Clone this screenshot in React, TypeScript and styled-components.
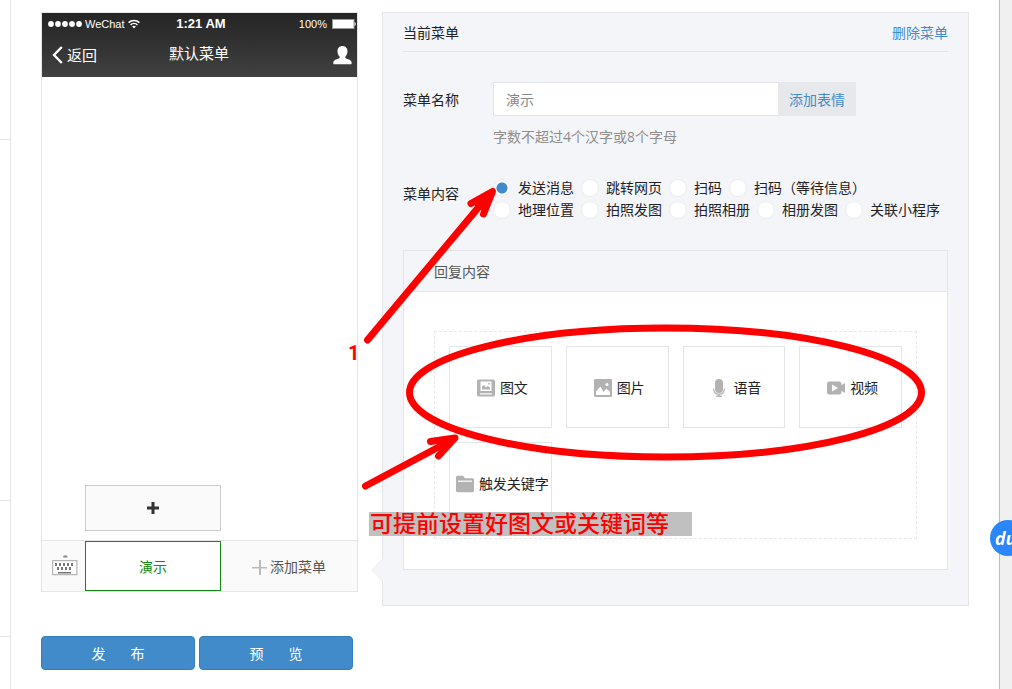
import React, { useState } from "react";
import styled, { createGlobalStyle } from "styled-components";

const line = "#e4e5e9";
const blue = "#428bca";
const red = "#ff0000";

const GlobalStyle = createGlobalStyle`
  *, *::before, *::after { box-sizing: border-box; }
  body {
    margin: 0;
    background: #fff;
    color: #222;
    font-family: "Open Sans", "Noto Sans CJK SC", sans-serif;
    font-size: 14px;
    line-height: 20px;
  }
  button, input { font: inherit; color: inherit; margin: 0; }
  button { border: 0; padding: 0; background: none; cursor: pointer; white-space: nowrap; }
  a { color: ${blue}; text-decoration: none; }
  svg { display: block; flex: none; }
`;

const Page = styled.div`
  display: flex;
  min-height: 100vh;
`;

const Rail = styled.div`
  display: flex;
  flex-direction: column;
  flex: 0 0 11px;
  border-right: 1px solid ${line};
`;

const RailCell = styled.div<{ $height: number }>`
  height: ${(p) => p.$height}px;
  border-bottom: 1px solid ${line};
`;

const Gutter = styled.div`
  flex: 0 0 13px;
  background: #f0f0f0;
  border-left: 1px solid #bdbdbd;
`;

const Workspace = styled.main`
  flex: 1;
  min-width: 0;
  display: flex;
  align-items: flex-start;
  gap: 24px;
  padding: 12px 30px 19px;
`;

const PhoneColumn = styled.section`
  flex: 0 0 317px;
  display: flex;
  flex-direction: column;
  gap: 44px;
`;

const Phone = styled.div`
  border: 1px solid ${line};
`;

const PhoneTop = styled.header`
  background: linear-gradient(#252526, #323233 50%, #414143);
  color: #fff;
  font-size: 15px;
`;

const StatusBar = styled.div`
  display: grid;
  grid-template-columns: 1fr auto 1fr;
  align-items: center;
  height: 22px;
  padding: 0 1px 0 6px;
  font-family: "Liberation Sans", sans-serif;
  font-size: 11px;
`;

const StatusGroup = styled.span<{ $end?: boolean }>`
  display: flex;
  align-items: center;
  gap: ${(p) => (p.$end ? 5 : 3)}px;
  justify-content: ${(p) => (p.$end ? "flex-end" : "flex-start")};
`;

const Clock = styled.strong`
  padding-right: 2px;
  font-size: 13px;
`;

const NavBar = styled.div`
  display: grid;
  grid-template-columns: 1fr auto 1fr;
  align-items: center;
  height: 42px;
  padding: 0 5px 2px 10px;
`;

const BackLink = styled.button`
  display: flex;
  align-items: center;
  gap: 4px;
  justify-self: start;
`;

const NavTitle = styled.span`
  padding: 0 6px 4px 0;
`;

const ProfileButton = styled.button`
  justify-self: end;
`;

const PhoneBody = styled.div`
  min-height: 463px;
  display: grid;
  grid-template-columns: 43px 1fr 1fr;
  align-items: end;
  padding-bottom: 9px;
`;

const SubMenuButton = styled.button`
  grid-column: 2;
  height: 46px;
  display: flex;
  align-items: center;
  justify-content: center;
  background: #fafafa;
  border: 1px solid #cdcdcd;
`;

const PhoneMenu = styled.div`
  display: grid;
  grid-template-columns: 43px 1fr 1fr;
  height: 51px;
  background: #fafafa;
  border-top: 1px solid ${line};
`;

const MenuButton = styled.button<{ $active?: boolean }>`
  display: flex;
  align-items: center;
  justify-content: center;
  gap: 3px;
  padding-top: 2px;
  color: ${(p) => (p.$active ? "#138813" : "#555")};
  background: ${(p) => (p.$active ? "#fff" : "transparent")};
  border: ${(p) => (p.$active ? "1px solid #138813" : "0")};
`;

const KeyboardButton = styled(MenuButton)`
  padding: 0 0 2px 2px;
`;

const Actions = styled.div`
  display: flex;
  gap: 4px;
`;

const ActionButton = styled.button`
  width: 154px;
  height: 34px;
  padding-top: 2px;
  color: #fff;
  background: ${blue};
  border: 1px solid #357ebd;
  border-radius: 4px;
  white-space: pre;
`;

const Panel = styled.section`
  position: relative;
  flex: 1;
  min-width: 0;
  background: #f4f5f9;
  border: 1px solid ${line};
  padding: 0 20px 35px;
`;

const PanelHeader = styled.header`
  display: flex;
  align-items: center;
  justify-content: space-between;
  height: 39px;
  padding-top: 2px;
  border-bottom: 1px solid ${line};
  margin-bottom: 30px;
`;

const Field = styled.div`
  display: grid;
  grid-template-columns: 90px 1fr;
  align-items: start;
`;

const FieldLabel = styled.label<{ $top: number }>`
  padding-top: ${(p) => p.$top}px;
`;

const InputGroup = styled.div`
  display: flex;
  max-width: 363px;
  height: 34px;
`;

const TextInput = styled.input`
  flex: 1;
  min-width: 0;
  padding: 2px 12px 0;
  color: #888;
  background: #fff;
  border: 1px solid ${line};
  border-right: 0;
  outline: 0;
`;

const AddonButton = styled.button`
  padding: 2px 11px 0;
  color: ${blue};
  background: #e7e8eb;
`;

const Hint = styled.p`
  margin: 11px 0 32px;
  color: #8d8d8d;
`;

const Options = styled.div`
  display: flex;
  flex-wrap: wrap;
  gap: 4px 7px;
  margin-bottom: 31px;
`;

const Option = styled.label`
  display: flex;
  align-items: center;
  gap: 7px;
  height: 18px;
  white-space: nowrap;
  cursor: pointer;
`;

const Radio = styled.input`
  appearance: none;
  width: 18px;
  height: 18px;
  border: 1px solid #ebecf0;
  border-radius: 50%;
  background: #fff;
  &:checked {
    background: radial-gradient(circle, ${blue} 0 5px, #f9fafc 6px);
  }
`;

const Reply = styled.section`
  background: #fff;
  border: 1px solid ${line};
`;

const ReplyHeader = styled.header`
  height: 41px;
  padding: 11px 30px 9px;
  color: #555;
  background: #f4f5f9;
  border-bottom: 1px solid ${line};
`;

const ReplyBody = styled.div`
  padding: 39px 30px 30px;
`;

const CardGrid = styled.div`
  display: grid;
  grid-template-columns: repeat(4, minmax(0, 1fr));
  gap: 14px;
  padding: 14px;
  border: 1px dashed #e7e7eb;
`;

const Card = styled.button`
  display: flex;
  align-items: center;
  justify-content: center;
  gap: 5px;
  height: 82px;
  padding: 2px 0 0 4px;
  border: 1px solid ${line};
`;

const Pointer = styled.svg`
  position: absolute;
  left: -12px;
  top: 544px;
`;

const Markup = styled.svg`
  position: absolute;
  left: -23px;
  top: 167px;
  pointer-events: none;
`;

const StepNumber = styled.strong`
  position: absolute;
  left: -35px;
  top: 330px;
  color: ${red};
  font-family: Roboto, sans-serif;
  font-size: 20px;
`;

const Remark = styled.strong`
  position: absolute;
  left: -14px;
  top: 499px;
  width: 323px;
  padding: 0 0 4px 1px;
  color: ${red};
  background: #c0c0c0;
  font-family: "Noto Sans CJK SC", sans-serif;
  font-size: 23px;
  font-weight: 500;
  line-height: 20px;
  white-space: nowrap;
`;

const FloatBadge = styled.button`
  position: fixed;
  top: 520px;
  right: -14px;
  width: 36px;
  height: 36px;
  padding-left: 5px;
  text-align: left;
  color: #fff;
  background: #2b85fb;
  border-radius: 50%;
  font-family: "Open Sans", sans-serif;
  font-size: 18px;
  font-style: italic;
  font-weight: 700;
`;

const SignalIcon = () => (
  <svg width="34" height="8" fill="#fff">
    {[3, 10, 17, 24, 31].map((x) => (
      <circle key={x} cx={x} cy="4" r="2.9" />
    ))}
  </svg>
);

const WifiIcon = () => (
  <svg width="12" height="10" viewBox="0 0 12 10" fill="none" stroke="#fff" strokeWidth="1.6">
    <path d="M.6 3.6a7.8 7.8 0 0 1 10.8 0M2.6 5.8a5 5 0 0 1 6.8 0" />
    <path d="M6 9.4 4.2 7.6a2.6 2.6 0 0 1 3.6 0z" fill="#fff" stroke="none" />
  </svg>
);

const BatteryIcon = () => (
  <svg width="24" height="10" viewBox="0 0 24 10">
    <rect x=".5" y=".5" width="21.5" height="9" fill="#fff" stroke="#999" />
    <path d="M22.5 3c1.6.6 1.6 3.4 0 4z" fill="#fff" />
  </svg>
);

const ChevronIcon = () => (
  <svg width="11" height="18" viewBox="0 0 11 18" fill="none" stroke="#fff" strokeWidth="2.4">
    <path d="M9.8 1 2 9l7.8 8" />
  </svg>
);

const PersonIcon = () => (
  <svg width="19" height="19" viewBox="0 0 19 19" fill="#fff">
    <path d="M9.5 0c3.2 0 5 2.200 5 5.200 0 2.300-1 4.400-2.200 5.500v1.400c1.900 1.200 6 1.700 6.300 4.200.1.800 0 2-.2 2H.6c-.2 0-.3-1.200-.2-2 .3-2.500 4.400-3 6.300-4.200v-1.400C5.500 9.600 4.500 7.500 4.500 5.200c0-3 1.800-5.200 5-5.200z" />
  </svg>
);

const BoldPlusIcon = () => (
  <svg width="12" height="12" fill="#333">
    <path d="M4.500 0h3v4.500H12v3H7.500V12h-3V7.500H0v-3h4.500z" />
  </svg>
);

const ThinPlusIcon = () => (
  <svg width="15" height="15" fill="#bbb">
    <path d="M7 0h2v7h6v1.500H9V15H7V8.500H0V7h7z" />
  </svg>
);

const KeyboardIcon = () => (
  <svg width="26" height="22" viewBox="0 0 26 22">
    <path d="M11 3.500a2.300 2.300 0 0 1 4.600 0z" fill="#888" />
    <rect x=".7" y="6.700" width="24.200" height="14" fill="#fff" stroke="#a5a5a5" />
    <g fill="#777">
      {[3, 7, 11, 15, 19].map((x) => (
        <rect key={x} x={x} y="9" width="2" height="3" />
      ))}
      {[5, 9, 13, 17].map((x) => (
        <rect key={x} x={x} y="13" width="2" height="3" />
      ))}
      <rect x="6" y="18" width="13" height="1.500" />
    </g>
  </svg>
);

const ArticleIcon = () => (
  <svg width="18" height="18" viewBox="0 0 18 18">
    <rect y=".5" width="18" height="17" rx="1.500" fill="#b2b2b2" />
    <rect x="3.500" y="2.500" width="11" height="9.500" fill="#fff" />
    <path d="M5 10.500V7.500l2-1.500 2 2.500 1.500-1.500 2.500 1.500v2zM11.200 4h1.600v1.600h-1.600z" fill="#b2b2b2" />
    <rect x="3" y="14.300" width="12" height="1.200" fill="#fff" />
  </svg>
);

const PictureIcon = () => (
  <svg width="18" height="18" viewBox="0 0 18 18">
    <rect width="18" height="18" rx="1" fill="#b2b2b2" />
    <path d="M2 16v-3.500l4.500-5 3 5.500 3-3.500 3.500 3.500V16z" fill="#fff" />
    <circle cx="13" cy="5.500" r="1.500" fill="#fff" />
  </svg>
);

const MicIcon = () => (
  <svg width="18" height="18" viewBox="0 0 18 18">
    <rect x="5" y="0" width="8" height="14" rx="4" fill="#b2b2b2" />
    <path d="M3.600 9.500c0 3.500 2 5.700 5.400 5.700s5.400-2.200 5.400-5.700" fill="none" stroke="#b2b2b2" strokeWidth="1.200" />
    <path d="M8.300 15h1.400v1.500h2V18H6.300v-1.500h2z" fill="#b2b2b2" />
  </svg>
);

const VideoIcon = () => (
  <svg width="18" height="18" viewBox="0 0 18 18">
    <rect y="2.500" width="14.500" height="13" rx="2.500" fill="#b2b2b2" />
    <path d="M14 6.500 18 4v10l-4-2.500z" fill="#b2b2b2" />
    <path d="M5 5.500 11 9l-6 3.500z" fill="#fff" />
  </svg>
);

const FolderIcon = () => (
  <svg width="18" height="18" viewBox="0 0 18 18">
    <path d="M0 2.500C0 1.500.7.800 1.500.800H7l2 2.400h7.500c.8 0 1.500.6 1.500 1.400v11.200c0 .8-.7 1.400-1.500 1.400h-15c-.8 0-1.500-.6-1.500-1.400z" fill="#b2b2b2" />
    <rect x="2" y="5.600" width="14" height="1.200" fill="#fff" />
  </svg>
);

const options = [
  "发送消息", "跳转网页", "扫码", "扫码（等待信息）",
  "地理位置", "拍照发图", "拍照相册", "相册发图", "关联小程序",
];

const cards = [
  { text: "图文", Icon: ArticleIcon },
  { text: "图片", Icon: PictureIcon },
  { text: "语音", Icon: MicIcon },
  { text: "视频", Icon: VideoIcon },
  { text: "触发关键字", Icon: FolderIcon },
];

export default function App() {
  const [kind, setKind] = useState(options[0]);
  const [name, setName] = useState("演示");

  return (
    <>
      <GlobalStyle />
      <Page>
        <Rail>
          <RailCell $height={140} />
          <RailCell $height={361} />
          <RailCell $height={136} />
        </Rail>
        <Workspace>
          <PhoneColumn>
            <Phone>
              <PhoneTop>
                <StatusBar>
                  <StatusGroup>
                    <SignalIcon />
                    WeChat
                    <WifiIcon />
                  </StatusGroup>
                  <Clock>1:21 AM</Clock>
                  <StatusGroup $end>
                    100%
                    <BatteryIcon />
                  </StatusGroup>
                </StatusBar>
                <NavBar>
                  <BackLink type="button">
                    <ChevronIcon />
                    返回
                  </BackLink>
                  <NavTitle>默认菜单</NavTitle>
                  <ProfileButton type="button" aria-label="个人">
                    <PersonIcon />
                  </ProfileButton>
                </NavBar>
              </PhoneTop>
              <PhoneBody>
                <SubMenuButton type="button" aria-label="添加子菜单">
                  <BoldPlusIcon />
                </SubMenuButton>
              </PhoneBody>
              <PhoneMenu>
                <KeyboardButton type="button" aria-label="键盘">
                  <KeyboardIcon />
                </KeyboardButton>
                <MenuButton type="button" $active>{name}</MenuButton>
                <MenuButton type="button">
                  <ThinPlusIcon />
                  添加菜单
                </MenuButton>
              </PhoneMenu>
            </Phone>
            <Actions>
              <ActionButton type="button">{"发\u3000\u00a0\u00a0\u00a0布"}</ActionButton>
              <ActionButton type="button">{"预\u3000\u00a0\u00a0\u00a0览"}</ActionButton>
            </Actions>
          </PhoneColumn>

          <Panel>
            <PanelHeader>
              <span>当前菜单</span>
              <a href="#delete">删除菜单</a>
            </PanelHeader>
            <Field>
              <FieldLabel htmlFor="menu-name" $top={8}>菜单名称</FieldLabel>
              <div>
                <InputGroup>
                  <TextInput id="menu-name" value={name} onChange={(e) => setName(e.target.value)} />
                  <AddonButton type="button">添加表情</AddonButton>
                </InputGroup>
                <Hint>字数不超过4个汉字或8个字母</Hint>
              </div>
            </Field>
            <Field role="radiogroup" aria-labelledby="menu-kind">
              <FieldLabel as="span" id="menu-kind" $top={5}>菜单内容</FieldLabel>
              <Options>
                {options.map((text) => (
                  <Option key={text}>
                    <Radio type="radio" name="kind" checked={kind === text} onChange={() => setKind(text)} />
                    {text}
                  </Option>
                ))}
              </Options>
            </Field>
            <Reply>
              <ReplyHeader>回复内容</ReplyHeader>
              <ReplyBody>
                <CardGrid>
                  {cards.map(({ text, Icon }) => (
                    <Card key={text} type="button">
                      <Icon />
                      {text}
                    </Card>
                  ))}
                </CardGrid>
              </ReplyBody>
            </Reply>

            <Pointer width="13" height="26" viewBox="0 0 13 26">
              <path d="M13 0 1 13l12 13z" fill="#f4f5f9" />
              <path d="M12 1 1 13l11 12" fill="none" stroke="#eeeff3" />
            </Pointer>
            <Markup width="570" height="320" viewBox="360 180 570 320" fill="none" stroke={red} strokeWidth="7" strokeLinecap="round" strokeLinejoin="round">
              <ellipse cx="665.5" cy="392.500" rx="256" ry="64.500" />
              <path d="M367.500 340 488 196" />
              <path d="M471 203.500 492.500 191.500 483.500 214" />
              <path d="M476 204 492 192 482 208z" strokeWidth="4" fill={red} />
              <path d="M365.500 486 450 441" />
              <path d="M430.500 441.500 455 438 438.500 456" />
              <path d="M440 444 455 438 443 451z" strokeWidth="3" fill={red} />
            </Markup>
            <StepNumber>1</StepNumber>
            <Remark>可提前设置好图文或关键词等</Remark>
          </Panel>
        </Workspace>
        <Gutter />
      </Page>
      <FloatBadge type="button">du</FloatBadge>
    </>
  );
}
